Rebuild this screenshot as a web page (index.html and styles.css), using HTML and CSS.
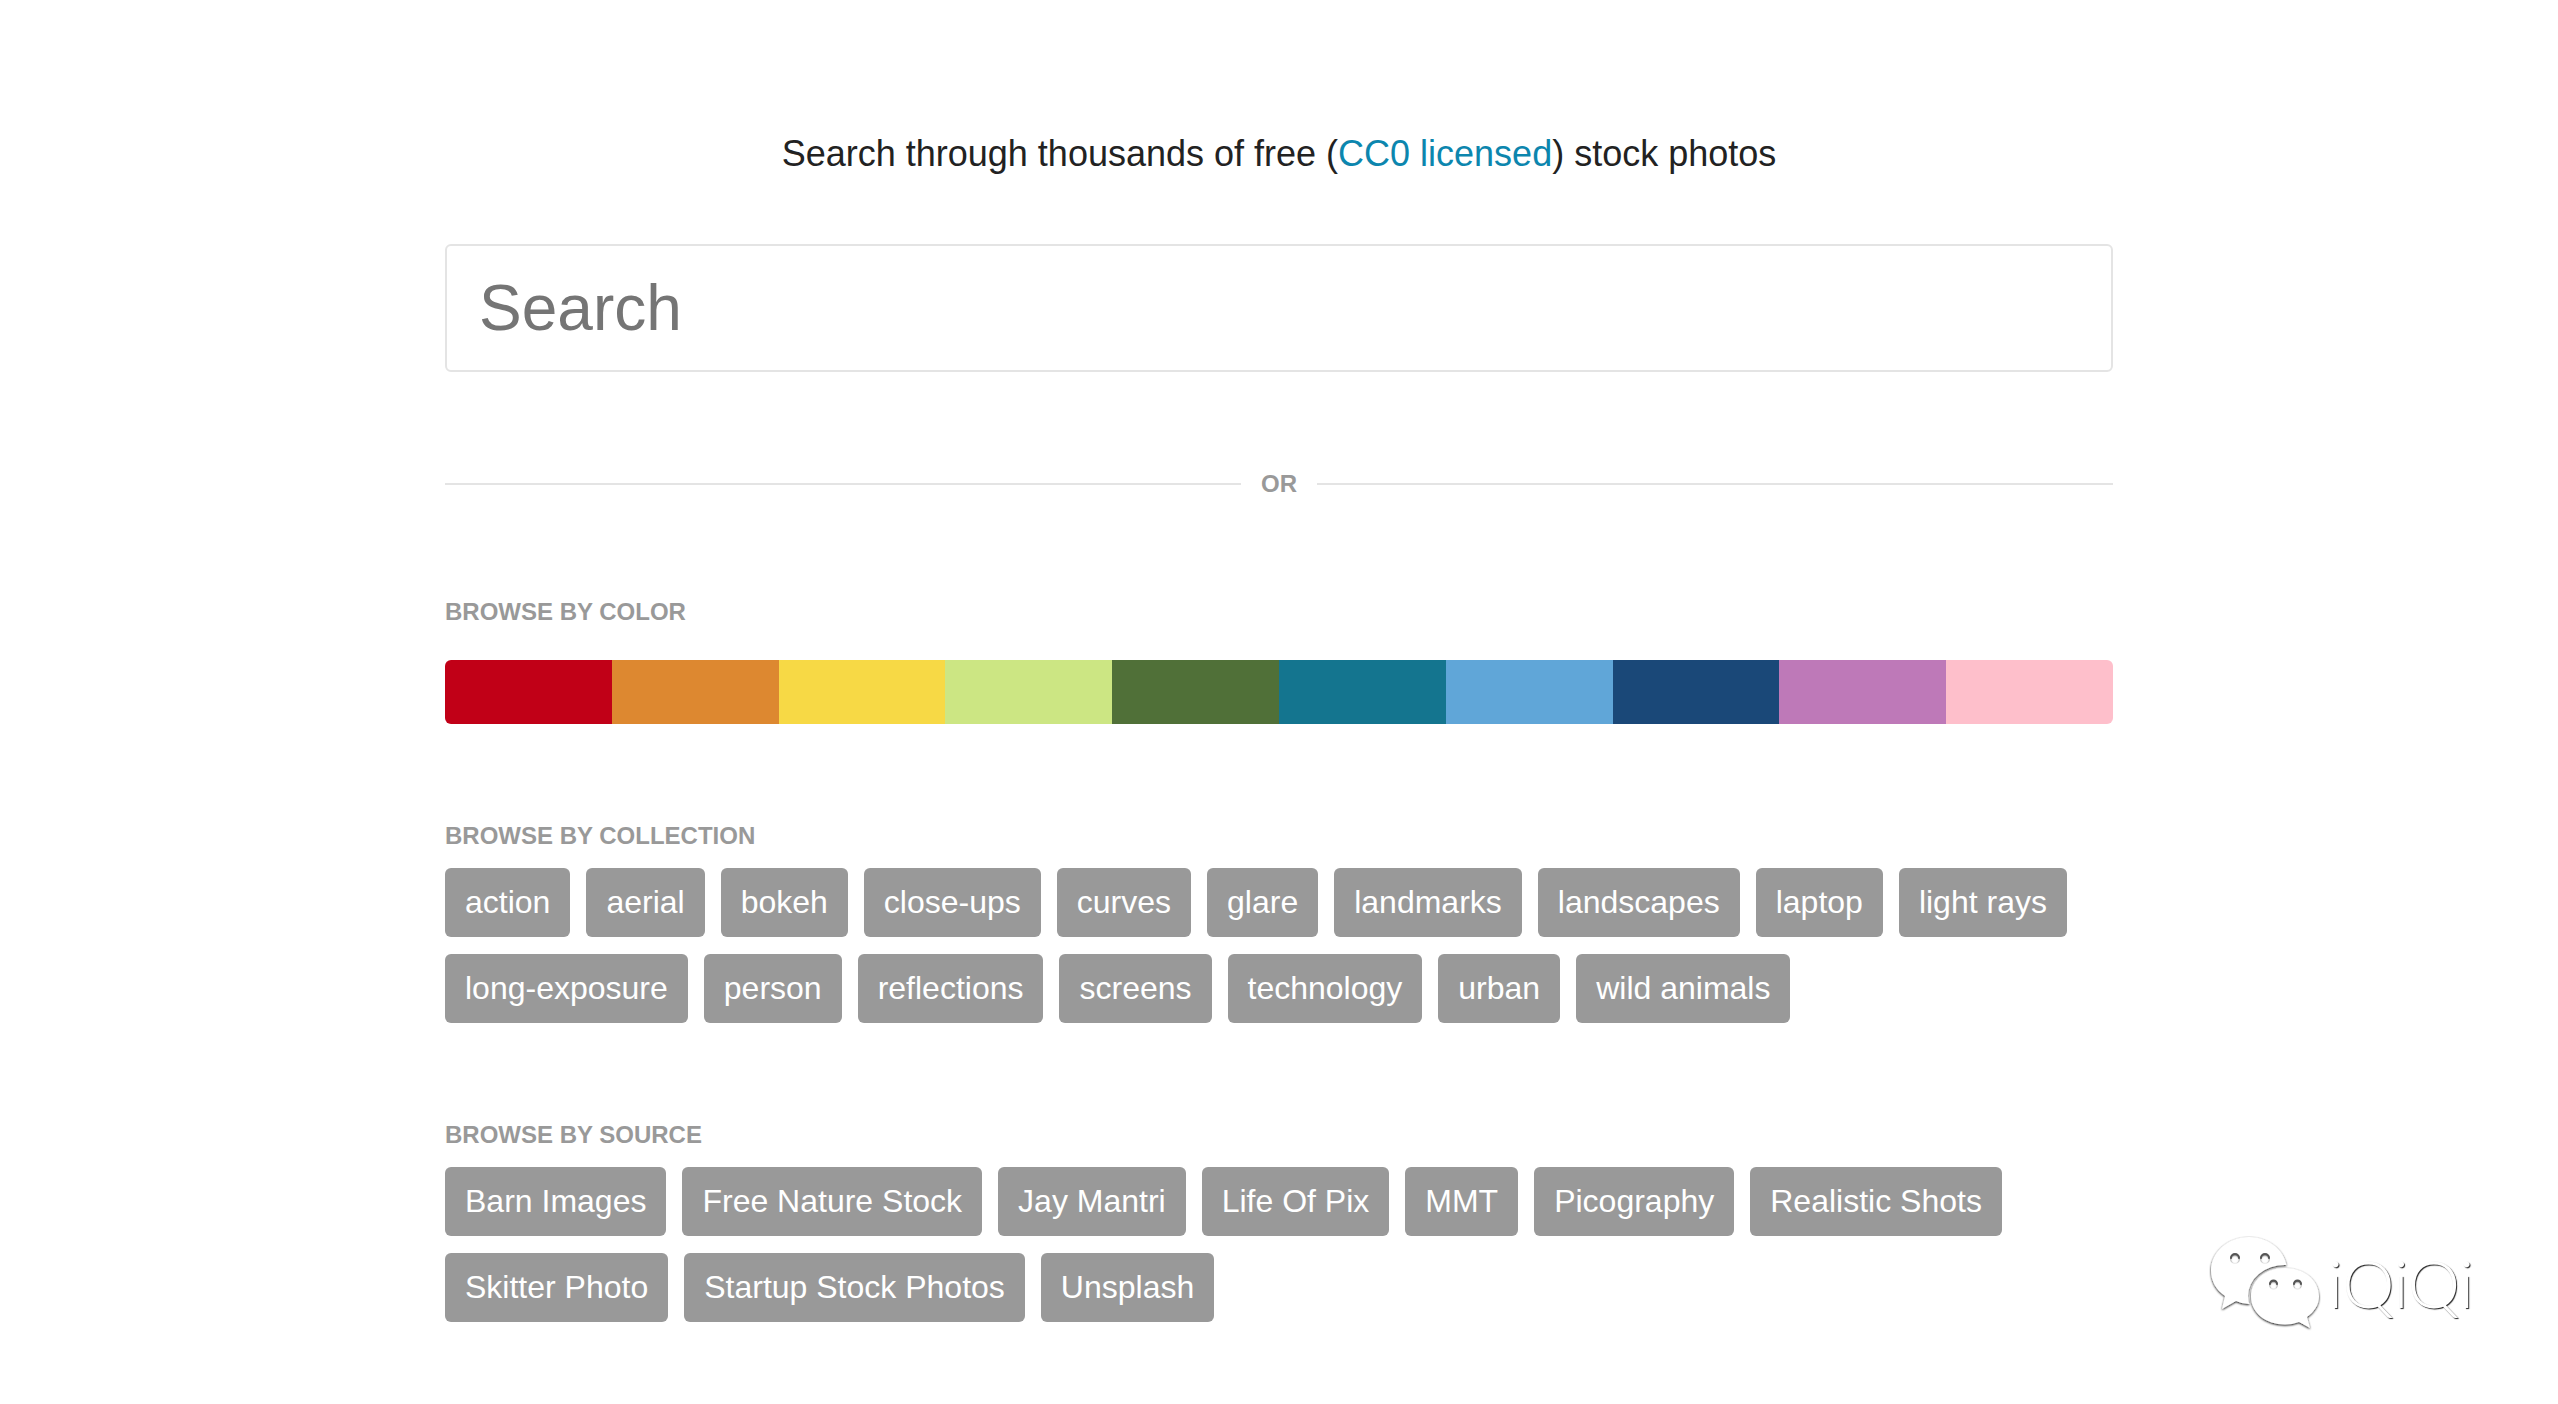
FILE: index.html
```html
<!DOCTYPE html>
<html lang="en">
<head>
  <meta charset="utf-8">
  <meta name="viewport" content="width=device-width, initial-scale=1">
  <title>Free stock photo search</title>
  <link rel="stylesheet" href="styles.css">
</head>
<body>
  <main class="page">
    <form class="search" role="search">
      <label class="search-label" for="query">Search through thousands of free (<a class="link" href="#cc0">CC0 licensed</a>) stock photos</label>
      <input class="search-input" id="query" type="search" placeholder="Search">
    </form>

    <p class="divider">OR</p>

    <section class="browse browse-color">
      <h2 class="browse-title">Browse by color</h2>
      <nav class="swatches" aria-label="Colors">
        <a class="swatch red" href="#red" aria-label="Red"></a>
        <a class="swatch orange" href="#orange" aria-label="Orange"></a>
        <a class="swatch yellow" href="#yellow" aria-label="Yellow"></a>
        <a class="swatch lime" href="#lime" aria-label="Lime"></a>
        <a class="swatch green" href="#green" aria-label="Green"></a>
        <a class="swatch teal" href="#teal" aria-label="Teal"></a>
        <a class="swatch sky" href="#sky" aria-label="Sky blue"></a>
        <a class="swatch navy" href="#navy" aria-label="Navy"></a>
        <a class="swatch purple" href="#purple" aria-label="Purple"></a>
        <a class="swatch pink" href="#pink" aria-label="Pink"></a>
      </nav>
    </section>

    <section class="browse">
      <h2 class="browse-title">Browse by collection</h2>
      <nav class="tags" aria-label="Collections">
        <a class="tag" href="#action">action</a>
        <a class="tag" href="#aerial">aerial</a>
        <a class="tag" href="#bokeh">bokeh</a>
        <a class="tag" href="#close-ups">close-ups</a>
        <a class="tag" href="#curves">curves</a>
        <a class="tag" href="#glare">glare</a>
        <a class="tag" href="#landmarks">landmarks</a>
        <a class="tag" href="#landscapes">landscapes</a>
        <a class="tag" href="#laptop">laptop</a>
        <a class="tag" href="#light-rays">light rays</a>
        <a class="tag" href="#long-exposure">long-exposure</a>
        <a class="tag" href="#person">person</a>
        <a class="tag" href="#reflections">reflections</a>
        <a class="tag" href="#screens">screens</a>
        <a class="tag" href="#technology">technology</a>
        <a class="tag" href="#urban">urban</a>
        <a class="tag" href="#wild-animals">wild animals</a>
      </nav>
    </section>

    <section class="browse">
      <h2 class="browse-title">Browse by source</h2>
      <nav class="tags" aria-label="Sources">
        <a class="tag" href="#barn-images">Barn Images</a>
        <a class="tag" href="#free-nature-stock">Free Nature Stock</a>
        <a class="tag" href="#jay-mantri">Jay Mantri</a>
        <a class="tag" href="#life-of-pix">Life Of Pix</a>
        <a class="tag" href="#mmt">MMT</a>
        <a class="tag" href="#picography">Picography</a>
        <a class="tag" href="#realistic-shots">Realistic Shots</a>
        <a class="tag" href="#skitter-photo">Skitter Photo</a>
        <a class="tag" href="#startup-stock-photos">Startup Stock Photos</a>
        <a class="tag" href="#unsplash">Unsplash</a>
      </nav>
    </section>
  </main>

  <div class="watermark">
    <svg class="watermark-icon" viewBox="0 0 120 106" aria-hidden="true">
      <defs>
        <filter id="shade" x="-10%" y="-10%" width="120%" height="120%">
          <feDropShadow dx="0" dy="1" stdDeviation="1" flood-color="#000" flood-opacity="1"/>
        </filter>
        <mask id="overlap">
          <rect width="120" height="106" fill="#fff"/>
          <ellipse cx="81" cy="66" rx="37" ry="31" fill="#000"/>
        </mask>
      </defs>
      <g filter="url(#shade)">
        <g mask="url(#overlap)">
          <path fill="#fff" fill-rule="evenodd" d="M45 7C66 7 83 22 83 40.500S66 74 45 74Q38 74 32 71L18 79L21 66C12 60 7 51 7 40.500C7 22 24 7 45 7ZM26 29a5 5 0 1 0 10 0a5 5 0 1 0 -10 0ZM56 29a5 5 0 1 0 10 0a5 5 0 1 0 -10 0Z"/>
        </g>
        <path fill="#fff" fill-rule="evenodd" d="M81 38C100 38 115 50 115 66.500C115 75 110 82 103 87L106 98L95 92Q88 94.500 81 94.500C62 94.500 47 83 47 66.500S62 38 81 38ZM65 55a4.500 4.500 0 1 0 9 0a4.500 4.500 0 1 0 -9 0ZM89 55a4.500 4.500 0 1 0 9 0a4.500 4.500 0 1 0 -9 0Z"/>
      </g>
      <g fill="none" stroke="#555" stroke-width="2" stroke-linecap="round">
        <path d="M27 28a4 4 0 0 1 8 0M57 28a4 4 0 0 1 8 0M66 54a3.500 3.500 0 0 1 7 0M90 54a3.500 3.500 0 0 1 7 0"/>
      </g>
    </svg>
    <span class="watermark-text">iQiQi</span>
  </div>
</body>
</html>
```
FILE: styles.css
```css
* {
  box-sizing: border-box;
}

body {
  margin: 0;
  background: #fff;
  color: #222;
  font-family: "Liberation Sans", Arial, sans-serif;
}

a {
  text-decoration: none;
}

.page {
  max-width: 1732px;
  margin: 0 auto;
  padding: 128px 32px 80px;
}

.search {
  display: flex;
  flex-direction: column;
  gap: 64px;
}

.search-label {
  font-size: 36px;
  line-height: 52px;
  text-align: center;
}

.link {
  color: #0c86ae;
}

.search-input {
  width: 100%;
  height: 128px;
  padding: 0 32px;
  border: 2px solid #e4e4e4;
  border-radius: 6px;
  background: #fff;
  color: #222;
  font-family: inherit;
  font-size: 64px;
  appearance: none;
}

.search-input::placeholder {
  color: #757575;
  opacity: 1;
}

.divider {
  display: flex;
  align-items: center;
  gap: 20px;
  margin: 96px 0;
  color: #999;
  font-size: 24px;
  font-weight: bold;
  line-height: 32px;
}

.divider::before,
.divider::after {
  content: "";
  flex: 1;
  height: 2px;
  background: #e4e4e4;
}

.browse {
  display: flex;
  flex-direction: column;
  gap: 16px;
  margin-bottom: 96px;
}

.browse-color {
  gap: 32px;
}

.browse:last-child {
  margin-bottom: 0;
}

.browse-title {
  margin: 0;
  color: #999;
  font-size: 24px;
  line-height: 32px;
  text-transform: uppercase;
}

.swatches {
  display: flex;
  height: 64px;
  overflow: hidden;
  border-radius: 6px;
}

.swatch {
  flex: 1;
}

.red { background: #c10017; }
.orange { background: #dd8830; }
.yellow { background: #f7d945; }
.lime { background: #cce683; }
.green { background: #507038; }
.teal { background: #14758f; }
.sky { background: #60a6d8; }
.navy { background: #1a4878; }
.purple { background: #be79b8; }
.pink { background: #febfcb; }

.tags {
  display: flex;
  flex-wrap: wrap;
  gap: 17px 16px;
}

.tag {
  padding: 16px 20px;
  border-radius: 6px;
  background: #999;
  color: #fff;
  font-size: 32px;
  line-height: 37px;
}

.watermark {
  position: fixed;
  right: 84px;
  bottom: 68px;
  display: flex;
  align-items: center;
  gap: 4px;
}

.watermark-icon {
  width: 120px;
  height: 106px;
}

.watermark-text {
  color: #fff;
  font-family: Lato, sans-serif;
  font-size: 66px;
  font-weight: 300;
  line-height: 72px;
  text-shadow: 1px 1px 1px #222;
}
```
